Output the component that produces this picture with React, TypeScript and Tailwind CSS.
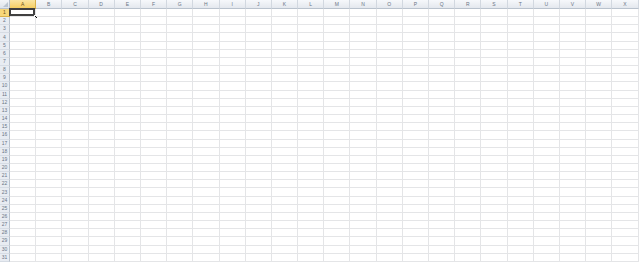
import React from 'react';

const COLS = 'ABCDEFGHIJKLMNOPQRSTUVWX'.split('');
const ROWS = Array.from({ length: 31 }, (_, i) => i + 1);

function ColHeader({ label, active }: { label: string; active?: boolean }) {
  return (
    <div
      className={`flex items-center justify-center border-r border-b text-[5px] leading-none ${
        active
          ? 'bg-gradient-to-b from-[#fbe6a3] to-[#f6cf62] border-r-[#d9b24e] border-b-[#c2962f] text-[#6b5316]'
          : 'bg-gradient-to-b from-[#f6f8fb] to-[#e4e8ee] border-r-[#d2d8e0] border-b-[#b9c2cd] text-[#6a7586]'
      }`}
    >
      {label}
    </div>
  );
}

function RowHeader({ n, active }: { n: number; active?: boolean }) {
  return (
    <div
      className={`flex items-center justify-center border-r border-b text-[5px] leading-none ${
        active
          ? 'bg-[#f8d77a] border-r-[#c2962f] border-b-[#d9b24e] text-[#6b5316]'
          : 'bg-[#e8ecf2] border-r-[#b9c2cd] border-b-[#d6dce4] text-[#6a7586]'
      }`}
    >
      {n}
    </div>
  );
}

export default function App() {
  return (
    <div
      className="w-[640px] h-[263px] overflow-hidden bg-white"
      style={{ fontFamily: '"Liberation Sans", Arial, sans-serif' }}
    >
      <div className="grid grid-cols-[10px_repeat(24,26.2px)] grid-rows-[9px_repeat(31,8.17px)]">
        {/* corner */}
        <div className="flex items-end justify-end p-[1px] bg-gradient-to-b from-[#f3f5f8] to-[#dfe4eb] border-r border-b border-[#b9c2cd]">
          <svg width="5" height="5" viewBox="0 0 5 5">
            <path d="M5 0 L5 5 L0 5 Z" fill="#bcc5d0" />
          </svg>
        </div>
        {COLS.map((c, i) => (
          <ColHeader key={c} label={c} active={i === 0} />
        ))}

        {ROWS.map((r) => (
          <React.Fragment key={r}>
            <RowHeader n={r} active={r === 1} />
            {COLS.map((c) => (
              <div key={c + r} className="relative border-r border-b border-[#e4e5e7]">
                {r === 1 && c === 'A' && (
                  <>
                    <div className="absolute -top-[1px] -left-[1px] right-0 bottom-0 border-2 border-[#404040]" />
                    <div className="absolute -right-[3px] -bottom-[3px] w-[4px] h-[4px] bg-black border border-white" />
                  </>
                )}
              </div>
            ))}
          </React.Fragment>
        ))}
      </div>
    </div>
  );
}
